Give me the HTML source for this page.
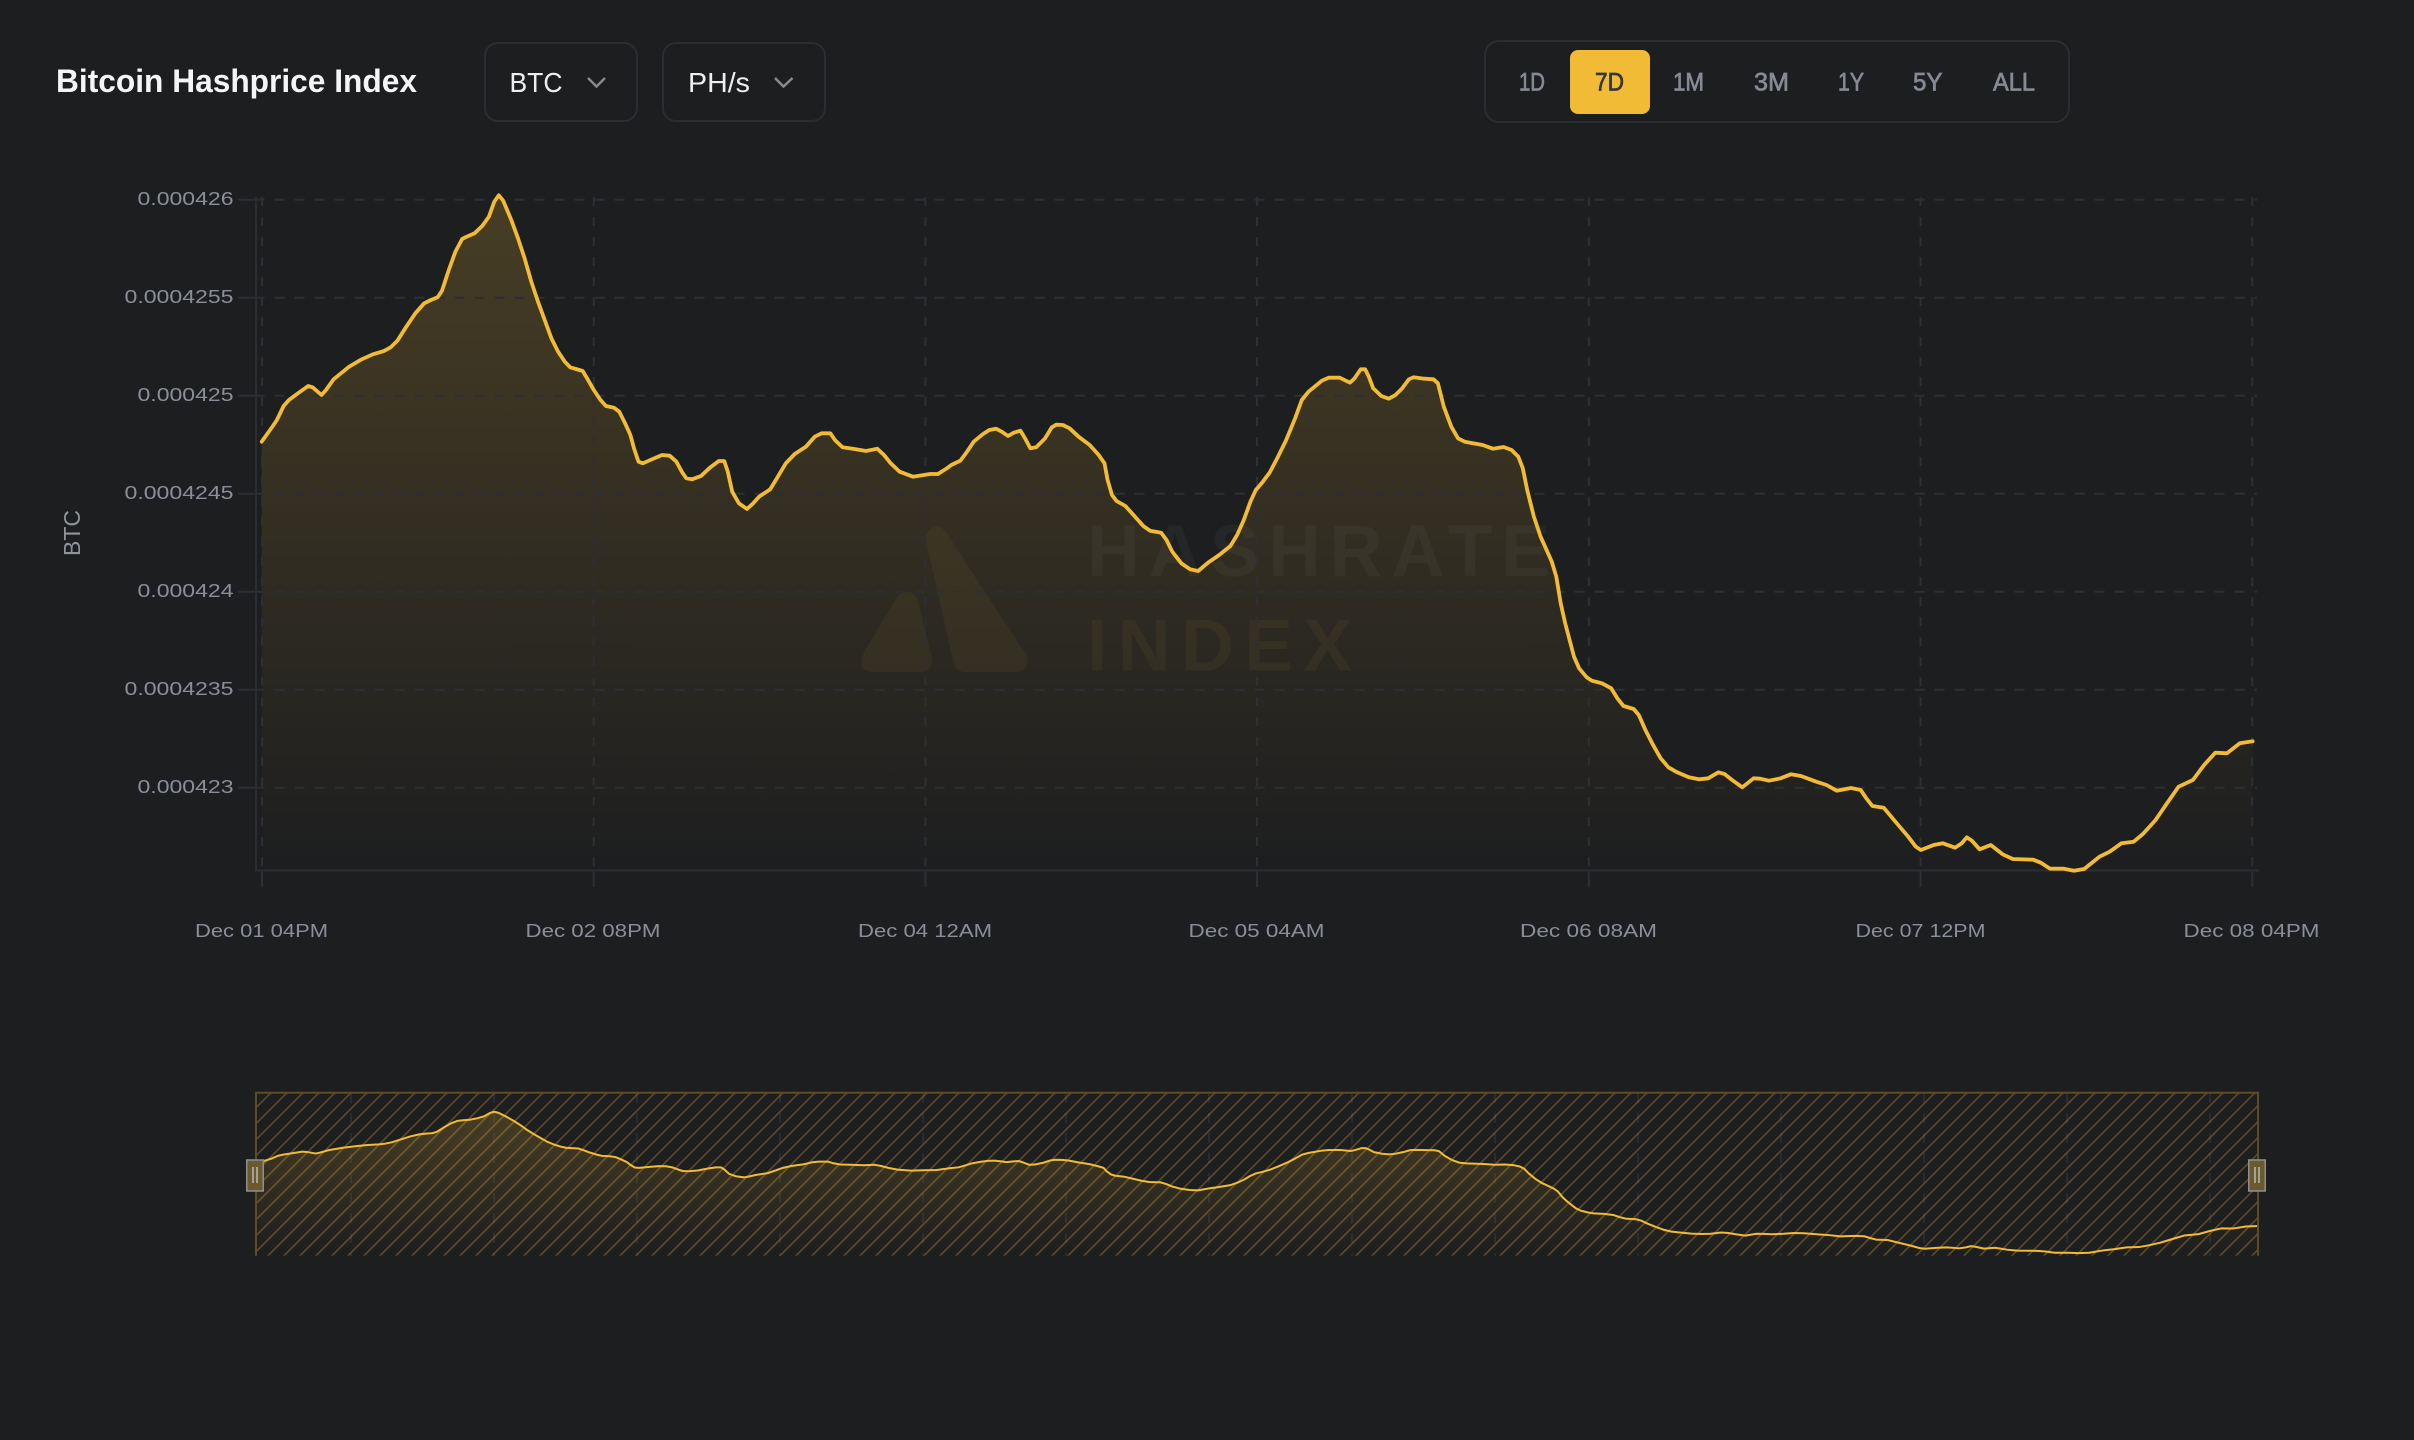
<!DOCTYPE html>
<html><head><meta charset="utf-8"><title>Bitcoin Hashprice Index</title>
<style>html,body{margin:0;padding:0;background:#1d1e20;width:2414px;height:1440px;overflow:hidden}svg{display:block}text{font-family:"Liberation Sans",sans-serif}</style></head>
<body>
<svg width="2414" height="1440" viewBox="0 0 2414 1440" xmlns="http://www.w3.org/2000/svg">
<defs>
<linearGradient id="g" gradientUnits="userSpaceOnUse" x1="0" y1="195" x2="0" y2="870"><stop offset="0" stop-color="#f2bb35" stop-opacity=".2"/><stop offset="1" stop-color="#f2bb35" stop-opacity="0"/></linearGradient>
<pattern id="h" patternUnits="userSpaceOnUse" width="16" height="16" patternTransform="translate(3.7 0)"><path d="M-4 4L4-4M0 16L16 0M12 20L20 12" stroke="#f2bb35" stroke-opacity=".3" stroke-width="1.6" fill="none"/></pattern>
<clipPath id="mainclip"><rect x="250" y="180" width="2020" height="691"/></clipPath>
<clipPath id="miniclip"><rect x="256" y="1092" width="2002" height="163.7"/></clipPath>
<polygon id="area" points="261.7,883 261.7,441.7 272.4,426.7 276.9,420 283.6,406 288.9,400 297,394 308.1,386 312.6,387.3 321.5,395 326,390 333.6,379.3 348.3,367.3 361.7,359.3 372.9,354.3 384,351 390.7,347.3 397.4,340.7 406.3,326.7 415.3,313.3 424.2,303.3 430.9,300 437.6,297.3 442,290.7 448.8,270 455.4,251.7 462.1,239 466.6,236.7 474.6,233.3 482.2,226 488.9,216.7 494.3,201.7 498.8,195.3 503.2,200.7 511.3,220 518,238.3 524.6,258.3 531.3,281.7 538,301.7 544.7,320 551.4,338.3 558.1,351.7 564.8,361.7 570.2,367.3 576,369 582.7,371 587.1,378.3 593.8,390 600.5,400 605.9,406 613.9,407.7 619.3,411.7 625.1,423.3 630.4,435 634,448.3 638.5,461.7 642.9,463.3 651.9,459.3 662.1,455 669.7,455.7 676.4,461.7 681.8,471.7 686.3,478.3 692,479.3 701,476 709.9,467.7 718.8,461 724.2,461 727.8,471.7 732.2,491.7 738.9,503.3 747,509 753.2,503.3 759,496.7 770.2,489.3 776.9,478.3 785.8,463.3 794.7,454 805.9,446.7 814.8,436.7 821.5,433.3 830.4,433.3 834.9,440 842.5,447.3 852.8,448.7 866.2,451 877.3,448.7 884,455 890.7,463.3 899.6,471.7 913,476.7 930,474 937.9,474 946.9,468.3 951.3,465 960.3,460.7 967,451.7 973.7,441.7 982.6,434.3 989.3,430 996,428.7 1001.8,431.7 1008,436 1013.8,432.7 1020.5,430.7 1025,438.3 1030.4,448.3 1036.2,447.3 1045.1,438.3 1051.8,427.3 1056.3,424.7 1062.9,425 1069.6,428.3 1078.6,436.7 1089.7,445 1098.7,455 1104.5,463.3 1107.6,480 1112,495 1116.5,501 1125.4,506 1134.4,516 1143.3,526 1150,530.7 1161.2,532.7 1166.5,540 1172.3,551.7 1181.3,563.3 1190.2,569.3 1198.2,571 1208,562.7 1219.2,555 1230.4,546 1237.1,535 1243.8,520 1250.4,501.7 1255.8,490 1261.6,483.3 1269.6,472.7 1277.2,458.3 1286.2,440 1295.1,418.3 1301.8,400 1308.5,391.7 1321.9,380.7 1328.6,377.7 1339.7,377.7 1350,382.7 1354.5,378.3 1360.7,369.3 1365.2,369.3 1368.8,376.7 1373.2,388.3 1381.3,396 1388.8,398.7 1395.5,395 1402.2,388.3 1408.9,379.3 1413.4,377.3 1424.6,378.7 1433.5,379.3 1437.9,383.3 1443.8,406.7 1451.3,426.7 1458,438.3 1464.7,441.7 1482.6,445 1492.9,448.7 1503.6,447 1511.6,450 1518.3,456.7 1522.8,468.3 1527.2,490 1533.9,516.7 1540.6,536.7 1551.8,561.7 1556.3,576.7 1560.7,603.3 1565.2,623.3 1569.6,640 1574,656.7 1579.1,668.3 1586.7,677.3 1591.8,680.7 1602,683.3 1611.2,688.3 1617.3,698.3 1623.5,706 1633.7,709 1638.8,715 1645.4,730 1653.1,745 1660.7,758.3 1668.4,767.3 1676,771.7 1688.8,777.3 1699,779.3 1708.2,778.3 1718.4,772.3 1724.5,774 1732.1,780 1742.3,787.3 1753.6,778.3 1760.2,778.7 1768.9,780.7 1780.6,778.3 1790.8,774.3 1801,776 1816.3,781.7 1826.5,785 1836.7,790.7 1851,788 1860.7,790 1866.3,798.3 1872.4,806 1883.7,807.7 1895.4,821.7 1908.2,836.7 1915.8,846.7 1920.9,850 1933.7,845 1942.9,843.3 1955.1,847.7 1961.7,843.3 1966.8,837.3 1971.9,840.7 1979.6,849.3 1990.8,845 2002.6,854.3 2012.8,859 2033.2,859.7 2040.8,862.7 2050,868.7 2063.8,868.7 2074,870.7 2084.2,869 2099.5,856.7 2109.7,851.7 2121.4,843.3 2133.7,841.7 2142.9,834 2155.6,820 2165.8,805 2178.6,786.7 2192.9,780 2204.1,765 2215.3,752.7 2227,753.3 2239.8,743.3 2252.6,741.3 2252.6,883"/>
<polyline id="curve" vector-effect="non-scaling-stroke" fill="none" stroke-linejoin="round" stroke-linecap="round" points="261.7,441.7 272.4,426.7 276.9,420 283.6,406 288.9,400 297,394 308.1,386 312.6,387.3 321.5,395 326,390 333.6,379.3 348.3,367.3 361.7,359.3 372.9,354.3 384,351 390.7,347.3 397.4,340.7 406.3,326.7 415.3,313.3 424.2,303.3 430.9,300 437.6,297.3 442,290.7 448.8,270 455.4,251.7 462.1,239 466.6,236.7 474.6,233.3 482.2,226 488.9,216.7 494.3,201.7 498.8,195.3 503.2,200.7 511.3,220 518,238.3 524.6,258.3 531.3,281.7 538,301.7 544.7,320 551.4,338.3 558.1,351.7 564.8,361.7 570.2,367.3 576,369 582.7,371 587.1,378.3 593.8,390 600.5,400 605.9,406 613.9,407.7 619.3,411.7 625.1,423.3 630.4,435 634,448.3 638.5,461.7 642.9,463.3 651.9,459.3 662.1,455 669.7,455.7 676.4,461.7 681.8,471.7 686.3,478.3 692,479.3 701,476 709.9,467.7 718.8,461 724.2,461 727.8,471.7 732.2,491.7 738.9,503.3 747,509 753.2,503.3 759,496.7 770.2,489.3 776.9,478.3 785.8,463.3 794.7,454 805.9,446.7 814.8,436.7 821.5,433.3 830.4,433.3 834.9,440 842.5,447.3 852.8,448.7 866.2,451 877.3,448.7 884,455 890.7,463.3 899.6,471.7 913,476.7 930,474 937.9,474 946.9,468.3 951.3,465 960.3,460.7 967,451.7 973.7,441.7 982.6,434.3 989.3,430 996,428.7 1001.8,431.7 1008,436 1013.8,432.7 1020.5,430.7 1025,438.3 1030.4,448.3 1036.2,447.3 1045.1,438.3 1051.8,427.3 1056.3,424.7 1062.9,425 1069.6,428.3 1078.6,436.7 1089.7,445 1098.7,455 1104.5,463.3 1107.6,480 1112,495 1116.5,501 1125.4,506 1134.4,516 1143.3,526 1150,530.7 1161.2,532.7 1166.5,540 1172.3,551.7 1181.3,563.3 1190.2,569.3 1198.2,571 1208,562.7 1219.2,555 1230.4,546 1237.1,535 1243.8,520 1250.4,501.7 1255.8,490 1261.6,483.3 1269.6,472.7 1277.2,458.3 1286.2,440 1295.1,418.3 1301.8,400 1308.5,391.7 1321.9,380.7 1328.6,377.7 1339.7,377.7 1350,382.7 1354.5,378.3 1360.7,369.3 1365.2,369.3 1368.8,376.7 1373.2,388.3 1381.3,396 1388.8,398.7 1395.5,395 1402.2,388.3 1408.9,379.3 1413.4,377.3 1424.6,378.7 1433.5,379.3 1437.9,383.3 1443.8,406.7 1451.3,426.7 1458,438.3 1464.7,441.7 1482.6,445 1492.9,448.7 1503.6,447 1511.6,450 1518.3,456.7 1522.8,468.3 1527.2,490 1533.9,516.7 1540.6,536.7 1551.8,561.7 1556.3,576.7 1560.7,603.3 1565.2,623.3 1569.6,640 1574,656.7 1579.1,668.3 1586.7,677.3 1591.8,680.7 1602,683.3 1611.2,688.3 1617.3,698.3 1623.5,706 1633.7,709 1638.8,715 1645.4,730 1653.1,745 1660.7,758.3 1668.4,767.3 1676,771.7 1688.8,777.3 1699,779.3 1708.2,778.3 1718.4,772.3 1724.5,774 1732.1,780 1742.3,787.3 1753.6,778.3 1760.2,778.7 1768.9,780.7 1780.6,778.3 1790.8,774.3 1801,776 1816.3,781.7 1826.5,785 1836.7,790.7 1851,788 1860.7,790 1866.3,798.3 1872.4,806 1883.7,807.7 1895.4,821.7 1908.2,836.7 1915.8,846.7 1920.9,850 1933.7,845 1942.9,843.3 1955.1,847.7 1961.7,843.3 1966.8,837.3 1971.9,840.7 1979.6,849.3 1990.8,845 2002.6,854.3 2012.8,859 2033.2,859.7 2040.8,862.7 2050,868.7 2063.8,868.7 2074,870.7 2084.2,869 2099.5,856.7 2109.7,851.7 2121.4,843.3 2133.7,841.7 2142.9,834 2155.6,820 2165.8,805 2178.6,786.7 2192.9,780 2204.1,765 2215.3,752.7 2227,753.3 2239.8,743.3 2252.6,741.3"/>
</defs>

<rect width="2414" height="1440" fill="#1d1e20"/>

<!-- header -->
<text x="56" y="92" font-size="32" font-weight="700" fill="#f5f5f6" textLength="361" lengthAdjust="spacingAndGlyphs">Bitcoin Hashprice Index</text>
<rect x="485" y="43" width="152" height="78" rx="13" fill="none" stroke="#2b2d32" stroke-width="2"/>
<text x="509.500" y="92" font-size="28" fill="#eeeeef" textLength="53" lengthAdjust="spacingAndGlyphs">BTC</text>
<path d="M588 78l8.5 8.5L605 78" fill="none" stroke="#8a8a8c" stroke-width="2.5"/>
<rect x="663" y="43" width="162" height="78" rx="13" fill="none" stroke="#2b2d32" stroke-width="2"/>
<text x="688" y="92" font-size="28" fill="#eeeeef" textLength="62" lengthAdjust="spacingAndGlyphs">PH/s</text>
<path d="M775 78l8.5 8.5L792.500 78" fill="none" stroke="#8a8a8c" stroke-width="2.5"/>

<rect x="1485" y="41" width="584" height="81" rx="14" fill="none" stroke="#2b2d32" stroke-width="2"/>
<rect x="1570" y="50" width="80" height="64" rx="8" fill="#f2bb35"/>
<g font-size="25" fill="#858a94" stroke="#858a94" stroke-width=".7">
<text x="1519" y="90.500" textLength="26" lengthAdjust="spacingAndGlyphs">1D</text>
<text x="1595" y="90.500" textLength="29" lengthAdjust="spacingAndGlyphs" fill="#33363c" stroke="#33363c">7D</text>
<text x="1673" y="90.500" textLength="31" lengthAdjust="spacingAndGlyphs">1M</text>
<text x="1754" y="90.500" textLength="35" lengthAdjust="spacingAndGlyphs">3M</text>
<text x="1838" y="90.500" textLength="26" lengthAdjust="spacingAndGlyphs">1Y</text>
<text x="1913" y="90.500" textLength="29.500" lengthAdjust="spacingAndGlyphs">5Y</text>
<text x="1993" y="90.500" textLength="42" lengthAdjust="spacingAndGlyphs">ALL</text>
</g>

<!-- y title -->
<text transform="translate(80 556) rotate(-90)" font-size="23" fill="#8f939b" textLength="46" lengthAdjust="spacingAndGlyphs">BTC</text>

<!-- y labels -->
<g font-size="18.500" fill="#8a8e98" text-anchor="end">
<text x="233.500" y="205" textLength="96" lengthAdjust="spacingAndGlyphs">0.000426</text>
<text x="233.500" y="303" textLength="109" lengthAdjust="spacingAndGlyphs">0.0004255</text>
<text x="233.500" y="401" textLength="96" lengthAdjust="spacingAndGlyphs">0.000425</text>
<text x="233.500" y="499" textLength="109" lengthAdjust="spacingAndGlyphs">0.0004245</text>
<text x="233.500" y="597" textLength="96" lengthAdjust="spacingAndGlyphs">0.000424</text>
<text x="233.500" y="695" textLength="109" lengthAdjust="spacingAndGlyphs">0.0004235</text>
<text x="233.500" y="793" textLength="96" lengthAdjust="spacingAndGlyphs">0.000423</text>
</g>

<!-- x labels -->
<g font-size="18.500" fill="#8a8e98" text-anchor="middle">
<text x="261.500" y="937" textLength="133" lengthAdjust="spacingAndGlyphs">Dec 01 04PM</text>
<text x="593" y="937" textLength="135" lengthAdjust="spacingAndGlyphs">Dec 02 08PM</text>
<text x="925" y="937" textLength="134" lengthAdjust="spacingAndGlyphs">Dec 04 12AM</text>
<text x="1256.500" y="937" textLength="136" lengthAdjust="spacingAndGlyphs">Dec 05 04AM</text>
<text x="1588.500" y="937" textLength="137" lengthAdjust="spacingAndGlyphs">Dec 06 08AM</text>
<text x="1920.500" y="937" textLength="130" lengthAdjust="spacingAndGlyphs">Dec 07 12PM</text>
<text x="2251.500" y="937" textLength="136" lengthAdjust="spacingAndGlyphs">Dec 08 04PM</text>
</g>

<!-- watermark -->
<text x="1087" y="576" font-size="73" font-weight="700" fill="#ffffff" fill-opacity=".04" textLength="463" lengthAdjust="spacing">HASHRATE</text>
<text x="1087" y="670.700" font-size="73" font-weight="700" fill="#f2bb35" fill-opacity=".05" textLength="265" lengthAdjust="spacing">INDEX</text>
<path d="M897 597Q906 587 916 596Q918 600 919 606L932 657Q933 672 920 672H872Q858 670 862 655Z" fill="#f2bb35" fill-opacity=".05"/>
<path d="M925 537Q930 526 938 527Q945 528 949 537L1027 656Q1031 672 1014 672H966Q954 672 953 660Z" fill="#f2bb35" fill-opacity=".05"/>

<!-- main area -->
<use href="#area" fill="url(#g)" clip-path="url(#mainclip)"/>

<!-- grid -->
<g stroke="#2d2f34" stroke-width="2" fill="none">
<g stroke-dasharray="10 10" stroke-dashoffset="7.400">
<path d="M262 199.700H2257M262 297.700H2257M262 395.700H2257M262 493.700H2257M262 591.700H2257M262 689.700H2257M262 787.700H2257"/>
</g>
<path d="M238 199.700H262M238 297.700H262M238 395.700H262M238 493.700H262M238 591.700H262M238 689.700H262M238 787.700H262"/>
<g stroke-dasharray="9 11">
<path d="M262 197V870M593.700 197V870M925.400 197V870M1257 197V870M1588.800 197V870M1920.500 197V870M2252.200 197V870"/>
</g>
<path d="M262 870V887M593.700 870V887M925.400 870V887M1257 870V887M1588.800 870V887M1920.500 870V887M2252.200 870V887"/>
<path d="M256 197V870.500H2259" stroke="#2b2d33"/>
</g>

<!-- main curve -->
<use href="#curve" stroke="#f2bb35" stroke-width="3.800"/>

<!-- mini chart -->
<g stroke="#292b30" stroke-width="2" stroke-dasharray="10 10" fill="none">
<path d="M351 1093V1256M494 1093V1256M637 1093V1256M780 1093V1256M923 1093V1256M1066 1093V1256M1209 1093V1256M1352 1093V1256M1495 1093V1256M1638 1093V1256M1781 1093V1256M1924 1093V1256M2067 1093V1256M2210 1093V1256"/>
</g>
<g clip-path="url(#miniclip)">
<g transform="translate(256 1111.700) scale(1.006 .2093) translate(-262 -195)">
<use href="#area" fill="url(#g)"/>
<use href="#curve" stroke="#f2bb35" stroke-width="2"/>
</g>
</g>
<rect x="256" y="1092" width="2002" height="163.700" fill="url(#h)"/>
<path d="M256 1255.700V1092.700H2258V1255.700" fill="none" stroke="#5d4d26" stroke-width="2"/>

<!-- handles -->
<rect x="246.750" y="1160" width="16.500" height="31" fill="#6b5a2e" stroke="#8f8f8f" stroke-width="1.500"/>
<path d="M253 1167V1183M257 1167V1183" stroke="#a2a298" stroke-width="2"/>
<rect x="2248.750" y="1160" width="16.500" height="31" fill="#6b5a2e" stroke="#8f8f8f" stroke-width="1.500"/>
<path d="M2255 1167V1183M2259 1167V1183" stroke="#a2a298" stroke-width="2"/>
</svg>
</body></html>
